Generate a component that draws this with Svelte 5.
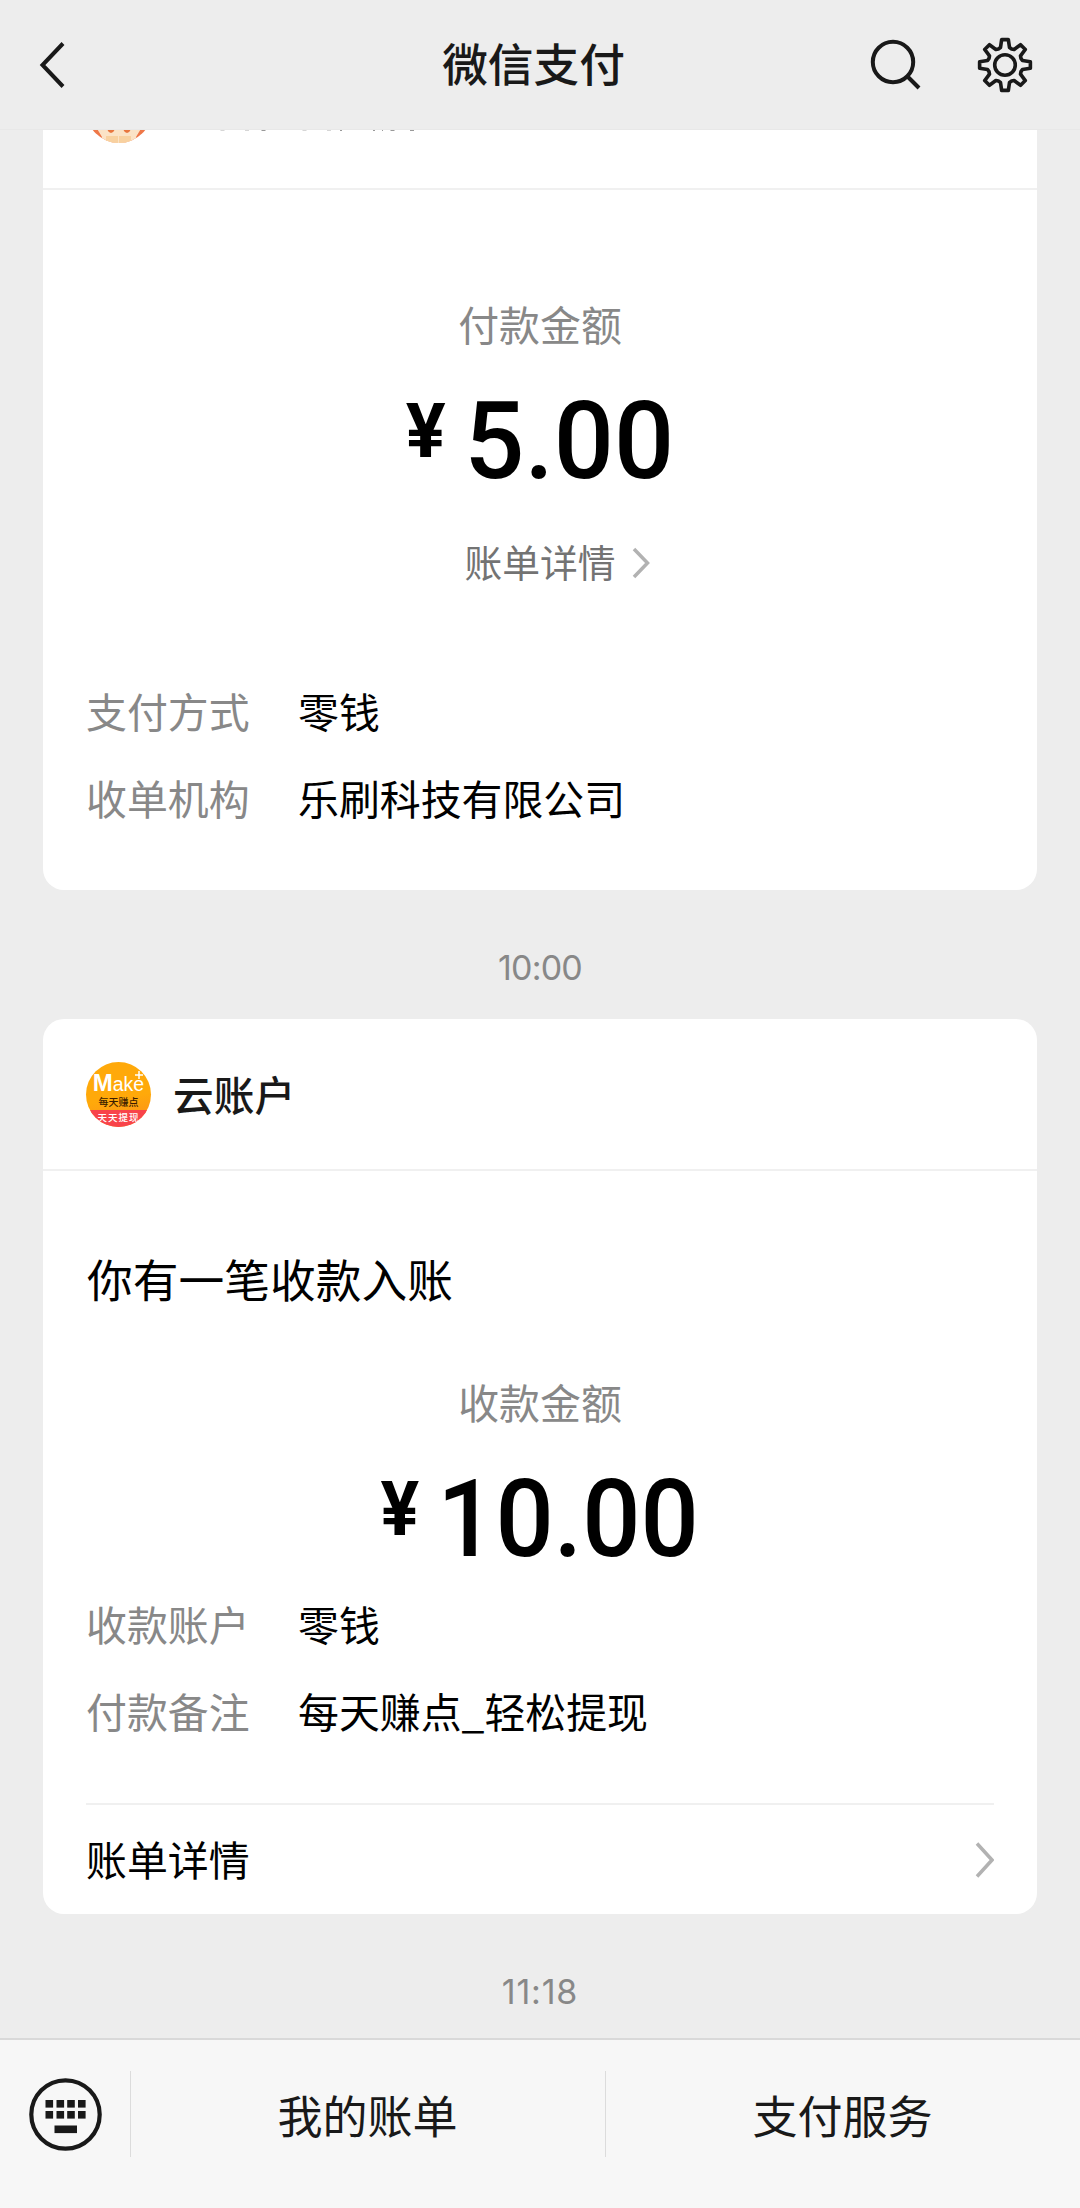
<script>
  const firstRows = [
    { label: '支付方式', value: '零钱' },
    { label: '收单机构', value: '乐刷科技有限公司' }
  ];

  const secondRows = [
    { label: '收款账户', value: '零钱' },
    { label: '付款备注', value: '每天赚点_轻松提现' }
  ];

  const keys = [45.5, 56.5, 67.2, 78];
  const menus = ['我的账单', '支付服务'];

  // outline of the settings gear, eight teeth
  const gearPath = () => {
    const points = [];
    for (let i = 0; i < 8; i++) {
      const base = i * 45 - 90;
      [[-22.5, 17.3], [-14.5, 18], [-7.5, 25.6], [7.5, 25.6], [14.5, 18]].forEach(([angle, r]) => {
        const a = ((base + angle) * Math.PI) / 180;
        points.push(`${(30 + r * Math.cos(a)).toFixed(2)} ${(30 + r * Math.sin(a)).toFixed(2)}`);
      });
    }
    return `M${points.join('L')}Z`;
  };
</script>

<div class="page">
  <header class="navbar">
    <svg class="back" width="28" height="50" viewBox="0 0 28 50" aria-label="返回">
      <path d="M25 3.500 4.500 25 25 46.500" />
    </svg>
    <h1>微信支付</h1>
    <div class="actions">
      <svg width="60" height="60" viewBox="0 0 60 60" aria-label="搜索">
        <circle cx="28" cy="27" r="20.2" />
        <path d="m42.500 41.500 11.500 11.500" />
      </svg>
      <svg class="gear" width="60" height="60" viewBox="0 0 60 60" aria-label="设置">
        <path d={gearPath()} />
        <circle cx="30" cy="30" r="10.300" />
      </svg>
    </div>
  </header>

  <main class="chat">
    <section class="card first">
      <div class="card-head">
        <svg class="avatar" width="66" height="66" viewBox="0 0 66 66">
          <clipPath id="round"><circle cx="33" cy="33" r="33" /></clipPath>
          <g clip-path="url(#round)">
            <rect width="66" height="66" fill="#ee7748" />
            <path d="M10 44h46v6l-6 10v8H16v-8l-6-10z" fill="#fbe3c6" />
            <path d="M21 51h8q-1 5-4 5t-4-5zM37 51h8q-1 5-4 5t-4-5z" fill="#e8763f" />
            <path d="M20 59h25v8H20z" fill="#f8d1a0" />
            <path d="M32.500 58v8" stroke="#fbe3c6" />
          </g>
        </svg>
        <svg class="hidden-name" width="240" height="66" viewBox="0 0 240 66">
          <path d="M45.500 53h4M70 53h4M127.500 53h4M152 53h4" opacity="0.4" />
          <path d="M86.500 53h4M165 53h2M198 53h2M207 53h1M215.500 53h4M235 53h4" />
        </svg>
      </div>
      <div class="amount-box">
        <p class="caption">付款金额</p>
        <p class="amount"><span class="yen">¥</span>5.00</p>
        <a class="bill" href="#bill">账单详情
          <svg width="18" height="34" viewBox="0 0 18 34"><path d="m2 3 13.500 14L2 31" /></svg>
        </a>
      </div>
      <dl>
        {#each firstRows as row}
          <dt>{row.label}</dt>
          <dd>{row.value}</dd>
        {/each}
      </dl>
    </section>

    <time>10:00</time>

    <section class="card second">
      <div class="card-head">
        <div class="avatar make">
          <span class="brand"><b>M</b>ake</span>
          <span class="slogan">每天赚点</span>
          <span class="ribbon">天天提现</span>
          <svg class="plus" width="8" height="8" viewBox="0 0 8 8"><path d="M4 0v8M0 4h8" /></svg>
        </div>
        <h2>云账户</h2>
      </div>
      <p class="notice">你有一笔收款入账</p>
      <div class="amount-box">
        <p class="caption">收款金额</p>
        <p class="amount"><span class="yen">¥</span>10.00</p>
      </div>
      <dl>
        {#each secondRows as row}
          <dt>{row.label}</dt>
          <dd>{row.value}</dd>
        {/each}
      </dl>
      <a class="detail" href="#bill">账单详情
        <svg width="20" height="40" viewBox="0 0 20 40"><path d="m3 3.500 15 16.500L3 36.500" /></svg>
      </a>
    </section>

    <time class="last">11:18</time>
  </main>

  <footer>
    <svg class="keyboard" width="130" height="86" viewBox="0 0 130 86" aria-label="键盘">
      <circle cx="65.500" cy="43.500" r="34.200" />
      {#each keys as x}
        <rect {x} y="29" width="7.600" height="7.600" />
        <rect {x} y="40" width="7.600" height="7.600" />
      {/each}
      <rect x="54.500" y="54.500" width="22.500" height="7.600" />
    </svg>
    {#each menus as menu}
      <button>{menu}</button>
    {/each}
  </footer>
</div>

<style>
  :global(body) {
    margin: 0;
    background: #ededed;
  }

  .page {
    display: flex;
    flex-direction: column;
    width: 1080px;
    height: 2208px;
    overflow: hidden;
    background: #ededed;
    color: #000;
    font-family: "Noto Sans CJK SC", sans-serif;
    font-size: 40.9px;
  }

  h1, h2, p, dl, dd {
    margin: 0;
  }

  a {
    color: inherit;
    text-decoration: none;
  }

  svg {
    flex: none;
    fill: none;
  }

  .navbar {
    display: grid;
    grid-template-columns: 1fr auto 1fr;
    align-items: center;
    box-sizing: border-box;
    flex: none;
    height: 130px;
    padding: 0 45px 0 38px;
    border-bottom: 1px solid #e8e8e8;
    color: #191919;
  }

  .navbar svg {
    stroke: #191919;
    stroke-width: 4;
  }

  .navbar .gear {
    stroke-width: 3.6;
    stroke-linejoin: round;
  }

  h1 {
    padding: 0 6px 5px 0;
    font-size: 45.7px;
    font-weight: 500;
    line-height: 60px;
  }

  .actions {
    display: flex;
    justify-content: flex-end;
    gap: 50px;
  }

  .chat {
    flex: none;
    height: 1908px;
    overflow: hidden;
    padding: 0 43px;
  }

  .card {
    box-sizing: border-box;
    border-radius: 21px;
    background: #fff;
  }

  .first {
    height: 852px;
    margin-top: -92px;
  }

  .second {
    height: 895px;
  }

  .card-head {
    display: flex;
    align-items: center;
    gap: 22px;
    height: 150px;
    padding: 0 43px;
    border-bottom: 2px solid #f0f0f0;
  }

  .first .card-head {
    align-items: flex-start;
    box-sizing: border-box;
    gap: 23px;
    height: 152px;
    padding-top: 39px;
  }

  .hidden-name {
    stroke: #999;
    stroke-width: 2;
  }

  .make {
    display: flex;
    position: relative;
    flex-direction: column;
    align-items: center;
    width: 65px;
    height: 65px;
    overflow: hidden;
    border-radius: 50%;
    background: linear-gradient(170deg, #ffa90a 55%, #fb8a1c);
    white-space: nowrap;
  }

  .brand {
    height: 34px;
    color: #fff;
    font: 19.5px/41px "Liberation Sans", sans-serif;
  }

  .brand b {
    font-size: 24px;
  }

  .plus {
    position: absolute;
    top: 9px;
    right: 8px;
    stroke: #fff;
    stroke-width: 1.5;
  }

  .slogan {
    height: 15px;
    color: #3b1c00;
    font-size: 10px;
    font-weight: 500;
    line-height: 11px;
  }

  .ribbon {
    width: 66px;
    height: 17px;
    background: #f8434a;
    color: #fff;
    font-size: 9.5px;
    font-weight: 500;
    letter-spacing: 1px;
    line-height: 15px;
    text-align: center;
  }

  h2 {
    padding-bottom: 1px;
    color: #191919;
    font-size: 40.7px;
    font-weight: 500;
    line-height: 60px;
  }

  .amount-box {
    display: flex;
    flex-direction: column;
    align-items: center;
  }

  .first .amount-box {
    padding-top: 105px;
  }

  .second .amount-box {
    padding-top: 63px;
  }

  .caption {
    color: #888;
    line-height: 58px;
  }

  /* slightly condensed figures */
  .amount {
    display: flex;
    align-items: flex-start;
    height: 108px;
    margin-top: 34px;
    font-family: Roboto, sans-serif;
    font-size: 108px;
    font-weight: 500;
    line-height: 108px;
    transform: scaleX(0.95);
  }

  .first .amount {
    transform: scaleX(0.98);
  }

  .yen {
    margin-right: 19px;
    font-size: 76px;
    font-weight: 700;
    line-height: 88px;
  }

  .bill {
    display: flex;
    align-items: center;
    gap: 16px;
    margin: 38px 0 0 34px;
    color: #737373;
    font-size: 37.8px;
    line-height: 56px;
  }

  .bill svg, .detail svg {
    stroke: #b2b2b2;
    stroke-width: 3.5;
  }

  .bill svg {
    margin-top: 3px;
  }

  dl {
    display: grid;
    grid-template-columns: 212px 1fr;
    padding: 0 43px;
    line-height: 87px;
  }

  .first dl {
    padding-top: 78px;
  }

  .second dl {
    padding-top: 7px;
  }

  dt {
    color: #888;
  }

  .notice {
    padding: 75px 44px 0;
    font-size: 45.75px;
    line-height: 64px;
  }

  .detail {
    display: flex;
    align-items: center;
    justify-content: space-between;
    height: 107px;
    margin: 49px 43px 0;
    border-top: 2px solid #f0f0f0;
  }

  .detail svg {
    margin-top: 2px;
  }

  time {
    display: block;
    padding: 63px 0 36px;
    color: #888;
    font-family: Inter, sans-serif;
    font-size: 34px;
    letter-spacing: -0.8px;
    line-height: 30px;
    text-align: center;
  }

  .last {
    letter-spacing: 0.8px;
  }

  footer {
    display: flex;
    box-sizing: border-box;
    flex: 1;
    padding-top: 31px;
    border-top: 2px solid #d9d9d9;
    background: #f7f7f7;
  }

  .keyboard circle {
    stroke: #191919;
    stroke-width: 4.2;
  }

  .keyboard rect {
    fill: #191919;
  }

  button {
    flex: 1;
    height: 86px;
    padding: 0 1px 0 0;
    border: 0;
    border-left: 1px solid #dcdcdc;
    background: none;
    color: #191919;
    font-family: inherit;
    font-size: 45px;
  }
</style>
